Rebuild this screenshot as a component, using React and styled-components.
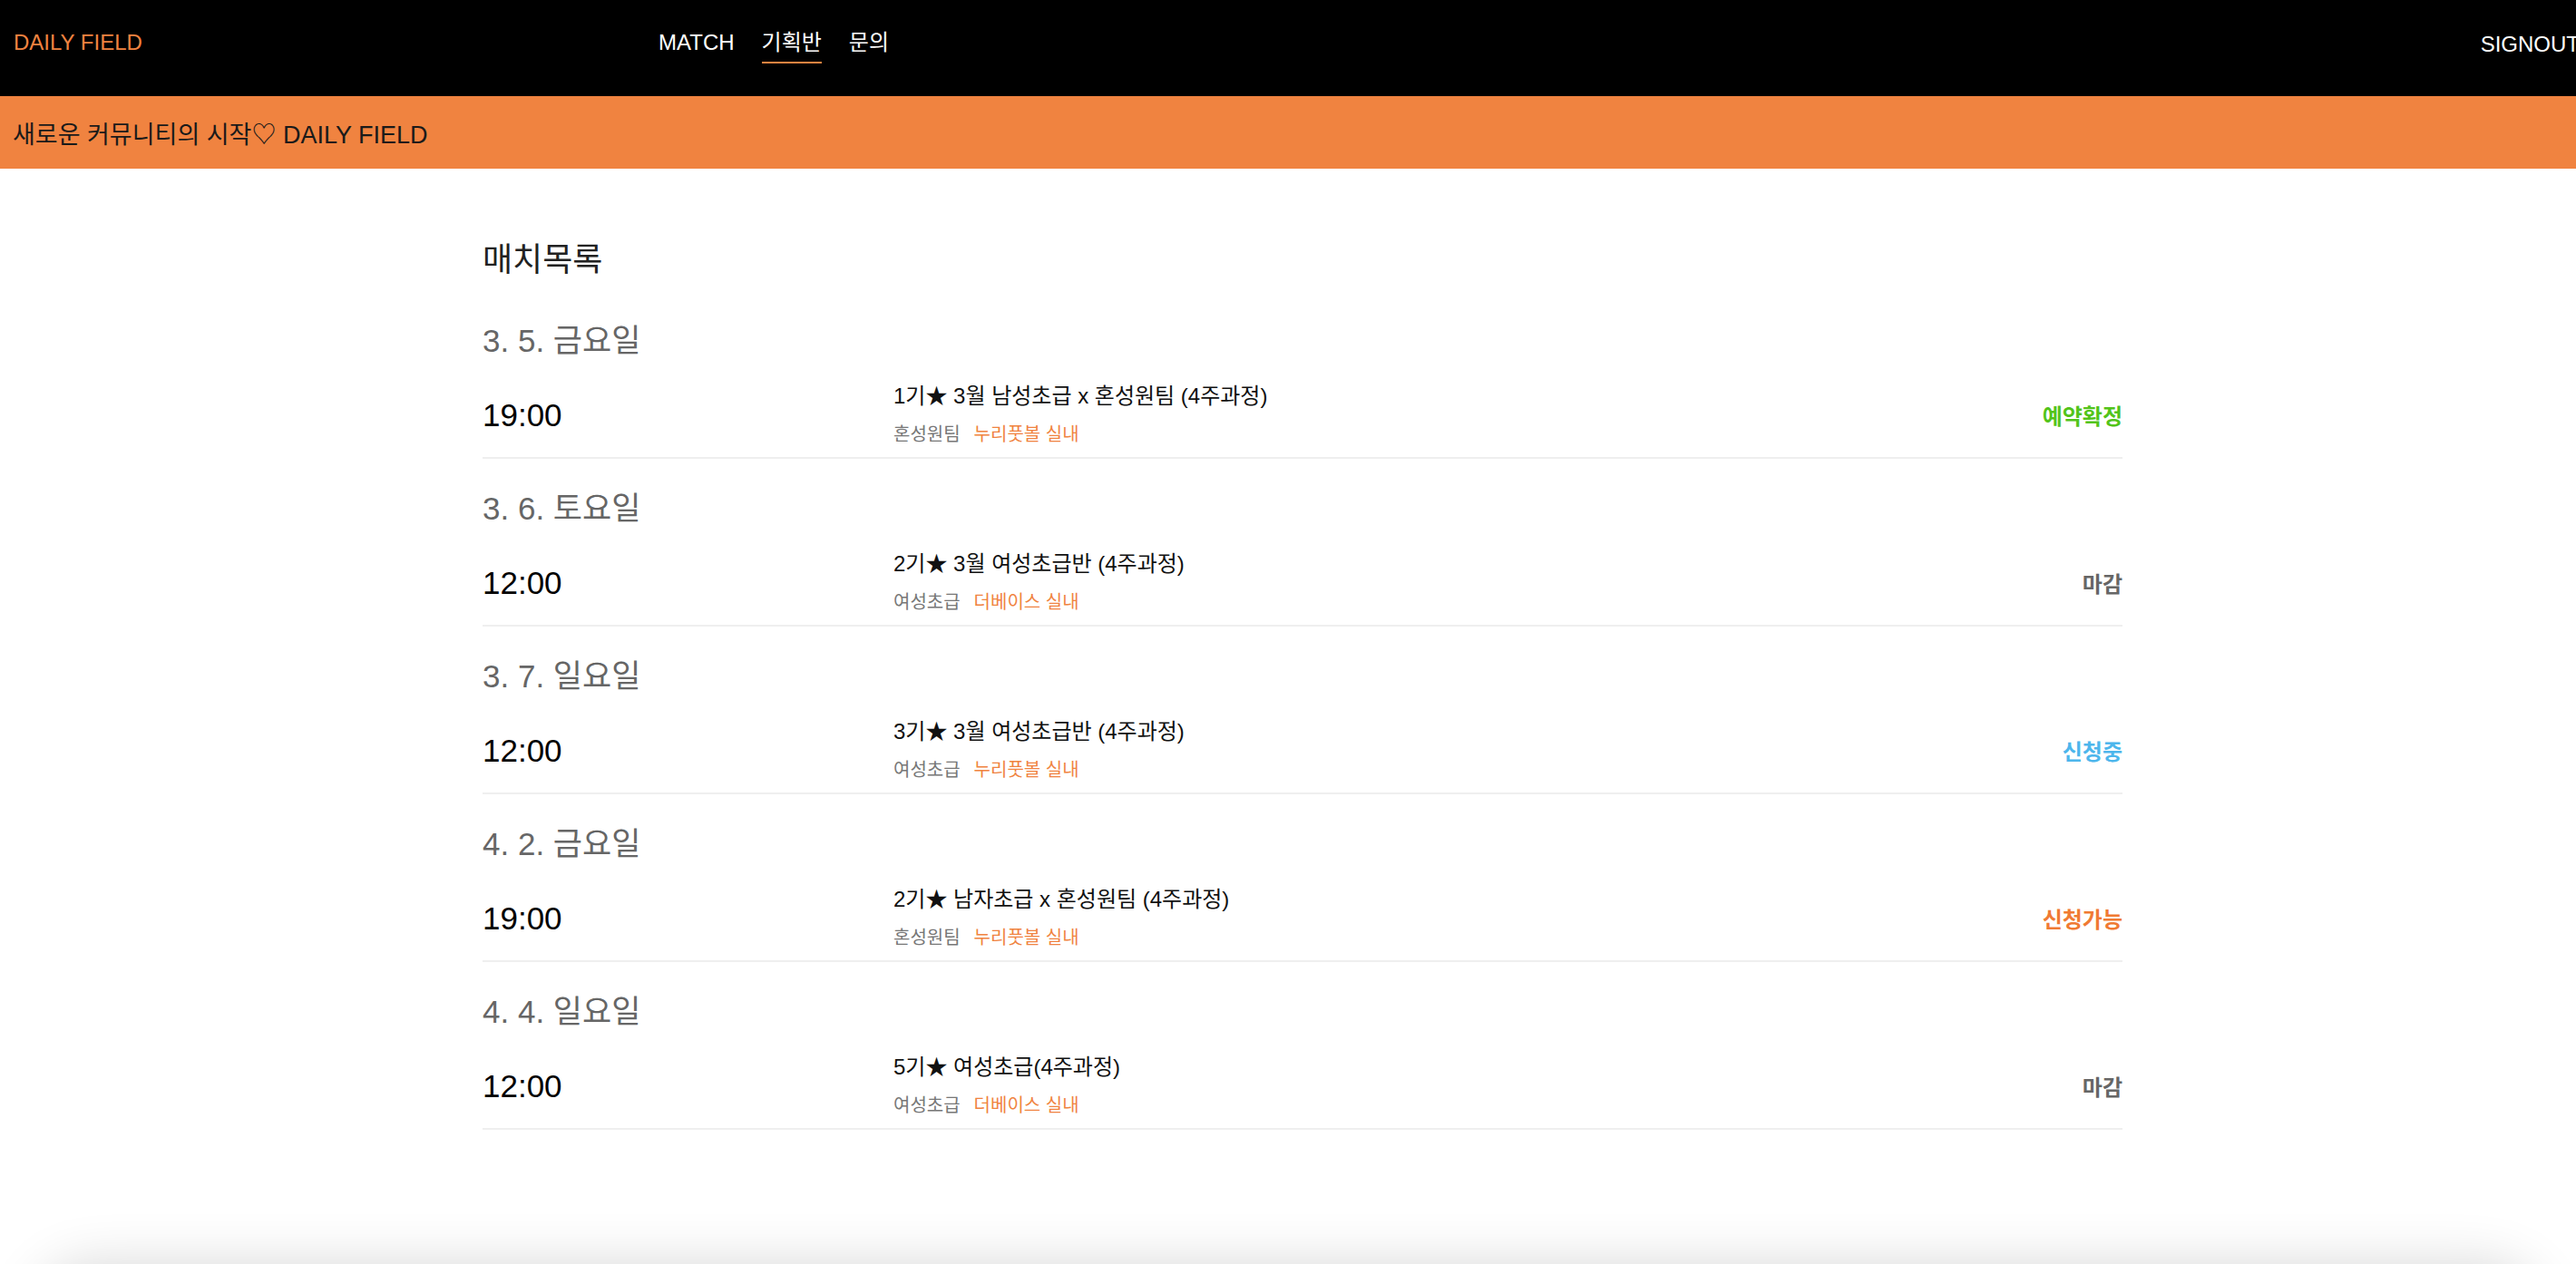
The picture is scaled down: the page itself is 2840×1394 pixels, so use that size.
import React from 'react';
import styled, { createGlobalStyle } from 'styled-components';

const ORANGE = '#f08340';

const GlobalStyle = createGlobalStyle`
  html, body {
    margin: 0;
    padding: 0;
    overflow-x: hidden;
    background: #fff;
    font-family: 'Liberation Sans', 'Noto Sans CJK KR', sans-serif;
  }
  * { box-sizing: border-box; }
`;

const Header = styled.header`
  display: flex;
  align-items: flex-start;
  height: 106px;
  padding: 32px 0 0 15px;
  background: #000;
  color: #fff;
  font-size: 24px;
  line-height: 30px;
`;

const Logo = styled.div`
  flex: 0 0 711px;
  color: ${ORANGE};
`;

const Nav = styled.nav`
  display: flex;
  gap: 30px;
`;

const NavItem = styled.a`
  color: #fff;
  text-decoration: none;
  padding-bottom: 6px;
  border-bottom: 2px solid ${(p) => (p.$active ? ORANGE : 'transparent')};
  cursor: pointer;
`;

const SignOut = styled.a`
  margin-left: auto;
  margin-right: -4px;
  margin-top: 2px;
  flex-shrink: 0;
  color: #fff;
  cursor: pointer;
`;

const Banner = styled.div`
  display: flex;
  align-items: center;
  height: 80px;
  padding-left: 14px;
  background: ${ORANGE};
  color: #1a1a1a;
  font-size: 27px;
`;

const Main = styled.main`
  width: 1840px;
  margin: 0 auto;
  padding: 77px 0 149px 32px;
`;

const PageTitle = styled.h2`
  margin: 0 0 10px;
  font-size: 36px;
  line-height: 48px;
  font-weight: 400;
  color: #222;
`;

const Group = styled.section`
  padding-top: 31px;
`;

const DateHeading = styled.h3`
  margin: 0;
  font-size: 35px;
  line-height: 48px;
  font-weight: 400;
  color: #666;
`;

const Row = styled.div`
  display: grid;
  grid-template-columns: 453px 1fr auto;
  align-items: center;
  height: 95px;
  margin-top: 11px;
  border-bottom: 2px solid #efefef;
`;

const Time = styled.div`
  font-size: 35px;
  color: #000;
`;

const Info = styled.div`
  display: flex;
  flex-direction: column;
`;

const MatchTitle = styled.div`
  font-size: 24px;
  line-height: 30px;
  color: #111;
`;

const Meta = styled.div`
  display: flex;
  margin-top: 14px;
  font-size: 20px;
  line-height: 27px;
  color: #777;
`;

const Place = styled.span`
  margin-left: 15px;
  color: ${ORANGE};
`;

const STATUS_COLORS = {
  confirmed: '#52c41a',
  closed: '#666',
  pending: '#4db6ec',
  open: '#f07a33',
};

const Status = styled.div`
  font-size: 24px;
  font-weight: 700;
  color: ${(p) => STATUS_COLORS[p.$kind]};
`;

const Footer = styled.footer`
  height: 200px;
  margin: 0 40px;
  border-radius: 60px;
  background: #fff;
  box-shadow: 0 0 60px rgba(0, 0, 0, 0.16);
`;

const matches = [
  {
    date: '3. 5. 금요일',
    time: '19:00',
    title: '1기★ 3월 남성초급 x 혼성원팀 (4주과정)',
    level: '혼성원팀',
    place: '누리풋볼 실내',
    status: '예약확정',
    kind: 'confirmed',
  },
  {
    date: '3. 6. 토요일',
    time: '12:00',
    title: '2기★ 3월 여성초급반 (4주과정)',
    level: '여성초급',
    place: '더베이스 실내',
    status: '마감',
    kind: 'closed',
  },
  {
    date: '3. 7. 일요일',
    time: '12:00',
    title: '3기★ 3월 여성초급반 (4주과정)',
    level: '여성초급',
    place: '누리풋볼 실내',
    status: '신청중',
    kind: 'pending',
  },
  {
    date: '4. 2. 금요일',
    time: '19:00',
    title: '2기★ 남자초급 x 혼성원팀 (4주과정)',
    level: '혼성원팀',
    place: '누리풋볼 실내',
    status: '신청가능',
    kind: 'open',
  },
  {
    date: '4. 4. 일요일',
    time: '12:00',
    title: '5기★ 여성초급(4주과정)',
    level: '여성초급',
    place: '더베이스 실내',
    status: '마감',
    kind: 'closed',
  },
];

const App = () => {
  return (
    <>
      <GlobalStyle />
      <Header>
        <Logo>DAILY FIELD</Logo>
        <Nav>
          <NavItem>MATCH</NavItem>
          <NavItem $active>기획반</NavItem>
          <NavItem>문의</NavItem>
        </Nav>
        <SignOut>SIGNOUT</SignOut>
      </Header>
      <Banner>새로운 커뮤니티의 시작♡ DAILY FIELD</Banner>
      <Main>
        <PageTitle>매치목록</PageTitle>
        {matches.map((m) => (
          <Group key={m.title}>
            <DateHeading>{m.date}</DateHeading>
            <Row>
              <Time>{m.time}</Time>
              <Info>
                <MatchTitle>{m.title}</MatchTitle>
                <Meta>
                  <span>{m.level}</span>
                  <Place>{m.place}</Place>
                </Meta>
              </Info>
              <Status $kind={m.kind}>{m.status}</Status>
            </Row>
          </Group>
        ))}
      </Main>
      <Footer />
    </>
  );
};

export default App;
